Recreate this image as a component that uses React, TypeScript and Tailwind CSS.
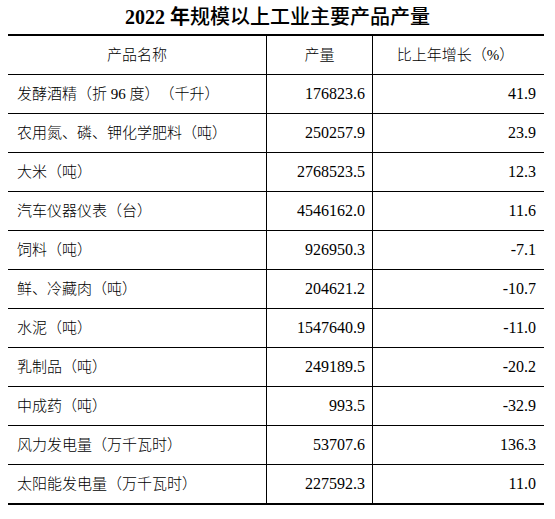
const rows: Array<[string, string, string]> = [
  ['发酵酒精（折 96 度）（千升）', '176823.6', '41.9'],
  ['农用氮、磷、钾化学肥料（吨）', '250257.9', '23.9'],
  ['大米（吨）', '2768523.5', '12.3'],
  ['汽车仪器仪表（台）', '4546162.0', '11.6'],
  ['饲料（吨）', '926950.3', '-7.1'],
  ['鲜、冷藏肉（吨）', '204621.2', '-10.7'],
  ['水泥（吨）', '1547640.9', '-11.0'],
  ['乳制品（吨）', '249189.5', '-20.2'],
  ['中成药（吨）', '993.5', '-32.9'],
  ['风力发电量（万千瓦时）', '53707.6', '136.3'],
  ['太阳能发电量（万千瓦时）', '227592.3', '11.0'],
];

const cjk = "font-['Liberation_Serif','Noto_Sans_CJK_SC',serif] [text-spacing-trim:space-all]";

export default function App() {
  return (
    <div className="w-[555px] h-[519px] bg-white px-[8px] text-black">
      {/* Title */}
      <div className={`h-[34px] flex items-center justify-center text-[20px] leading-none ${cjk}`}>
        <span className="font-bold">2022 年</span>
        <span className="font-medium">规模以上工业主要产品产量</span>
      </div>

      <div className="w-[536px] border-t-2 border-b-2 border-black">
        {/* Header */}
        <div className={`grid grid-cols-[259px_106px_171px] h-[39px] border-b border-black text-[15px] font-light ${cjk}`}>
          <div className="flex items-center justify-center border-r border-black">产品名称</div>
          <div className="flex items-center justify-center border-r border-black">产量</div>
          <div className="flex items-center justify-center pr-[6px]">比上年增长（%）</div>
        </div>

        {rows.map(([name, output, growth], i) => (
          <div
            key={name}
            className={`grid grid-cols-[259px_106px_171px] ${
              i === rows.length - 1 ? 'h-[38px]' : 'h-[39px] border-b border-black'
            }`}
          >
            <div className={`flex items-center pl-[9px] border-r border-black text-[15px] font-light ${cjk}`}>
              {name}
            </div>
            <div className="flex items-center justify-end pr-[7px] border-r border-black text-[16px] font-['Liberation_Serif',serif]">
              {output}
            </div>
            <div className="flex items-center justify-end pr-[8px] text-[16px] font-['Liberation_Serif',serif]">
              {growth}
            </div>
          </div>
        ))}
      </div>
    </div>
  );
}
